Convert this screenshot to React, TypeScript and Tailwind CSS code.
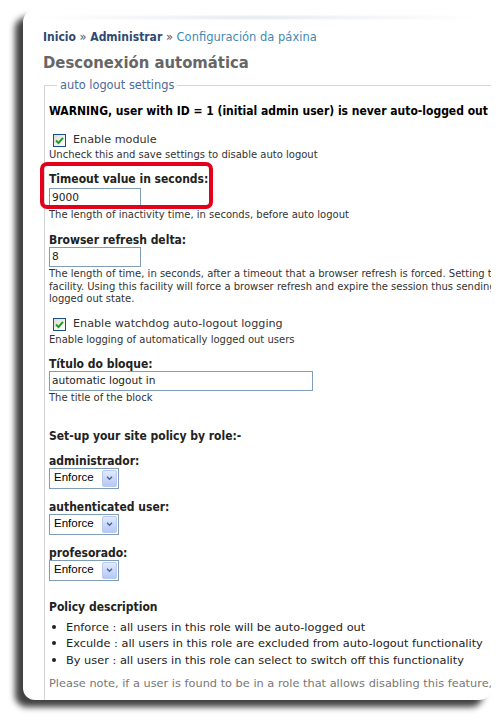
import React from "react";

const font = { fontFamily: '"DejaVu Sans", Verdana, sans-serif' };
const boldFont = { fontFamily: '"DejaVu Sans Condensed", "DejaVu Sans", Tahoma, sans-serif' };

function Checkbox() {
  return (
    <span className="flex h-[13px] w-[13px] shrink-0 items-center justify-center border border-[#1c5180] bg-gradient-to-br from-[#dcdcd7] to-white">
      <svg viewBox="0 0 9 9" className="h-[9px] w-[9px]">
        <path d="M1 4.5 L3.5 7 L8 1.8" fill="none" stroke="#21a121" strokeWidth="2" />
      </svg>
    </span>
  );
}

function TextInput({ value, width }: { value: string; width: string }) {
  return (
    <div className={`flex h-[20px] items-center border border-[#7f9db9] bg-white pl-[2px] text-[10.6px] text-[#222] ${width}`}>
      {value}
    </div>
  );
}

function Select() {
  return (
    <div className="flex h-[21px] w-[70px] items-center justify-between border border-[#7f9db9] bg-white pl-[4px] pr-[1px] text-[11.5px] text-black" style={{ fontFamily: '"Liberation Sans", Arial, sans-serif' }}>
      <span>Enforce</span>
      <span className="flex h-[17px] w-[15px] items-center justify-center rounded-[2px] border border-[#b9c9ef] bg-gradient-to-b from-[#e1eafd] to-[#b5c8f5]">
        <svg viewBox="0 0 8 6" className="h-[5px] w-[7px]">
          <path d="M1 1 L4 4 L7 1" fill="none" stroke="#4d6185" strokeWidth="1.6" />
        </svg>
      </span>
    </div>
  );
}

function Label({ children, className = "" }: { children: React.ReactNode; className?: string }) {
  return (
    <div className={`whitespace-nowrap text-[12px] font-bold leading-[14px] text-[#222] ${className}`} style={boldFont}>
      {children}
    </div>
  );
}

function Desc({ children, className = "" }: { children: React.ReactNode; className?: string }) {
  return <div className={`whitespace-nowrap text-[10px] leading-[13px] text-[#333] ${className}`}>{children}</div>;
}

export default function App() {
  return (
    <div className="h-[723px] w-[500px] overflow-hidden bg-white pt-[10px] pl-[23px]" style={font}>
      <div className="relative h-[690px] w-[468px] overflow-hidden rounded-[12px] bg-white pt-[19px] pl-[20px] shadow-[-8px_7px_6px_rgba(0,0,0,0.75)]">
        <div className="absolute left-[10px] right-[10px] top-[6px] h-[3px] bg-gradient-to-r from-transparent via-[#dfe6ee] to-transparent blur-[1px]" />
        <div className="whitespace-nowrap text-[11.5px] leading-[16px]">
          <span className="text-[12px] font-bold text-[#2d4a73]" style={boldFont}>Inicio</span>
          <span className="text-[#555]"> » </span>
          <span className="text-[12px] font-bold text-[#2d4a73]" style={boldFont}>Administrar</span>
          <span className="text-[#555]"> » </span>
          <span className="text-[#3f8ab4]">Configuración da páxina</span>
        </div>
        <h1 className="mt-[7px] whitespace-nowrap text-[16.5px] font-bold leading-[22px] text-[#666]" style={boldFont}>
          Desconexión automática
        </h1>

        <fieldset className="ml-[1px] mt-[4px] w-[480px] border border-[#d4d4d4] pb-[20px] pl-[4px] pt-0">
          <legend className="ml-[8px] px-[3px] text-[11.4px] leading-[15px] text-[#4a6a9b]">auto logout settings</legend>

          <div className="mt-[11px] whitespace-nowrap text-[12px] font-bold leading-[15px] text-black" style={boldFont}>
            WARNING, user with ID = 1 (initial admin user) is never auto-logged out
          </div>

          <div className="ml-[4px] mt-[13px] flex h-[16px] items-center gap-[7px] text-[11.2px] text-[#333]">
            <Checkbox />
            <span>Enable module</span>
          </div>
          <Desc>Uncheck this and save settings to disable auto logout</Desc>

          <Label className="mt-[11px]">Timeout value in seconds:</Label>
          <div className="mt-[2px]">
            <TextInput value="9000" width="w-[92px]" />
          </div>
          <Desc>The length of inactivity time, in seconds, before auto logout</Desc>

          <Label className="mt-[12px]">Browser refresh delta:</Label>
          <TextInput value="8" width="w-[92px]" />
          <div className="mt-[1px] whitespace-nowrap text-[10px] leading-[12.5px] text-[#333]">
            The length of time, in seconds, after a timeout that a browser refresh is forced. Setting this to 0 disables this
            <br />
            facility. Using this facility will force a browser refresh and expire the session thus sending the user to the
            <br />
            logged out state.
          </div>

          <div className="ml-[4px] mt-[11px] flex h-[16px] items-center gap-[7px] text-[11.2px] text-[#333]">
            <Checkbox />
            <span>Enable watchdog auto-logout logging</span>
          </div>
          <Desc>Enable logging of automatically logged out users</Desc>

          <Label className="mt-[11px]">Título do bloque:</Label>
          <TextInput value="automatic logout in" width="w-[264px]" />
          <Desc>The title of the block</Desc>

          <Label className="mt-[25px]">Set-up your site policy by role:-</Label>

          <Label className="mt-[11px]">administrador:</Label>
          <Select />
          <Label className="mt-[11px]">authenticated user:</Label>
          <Select />
          <Label className="mt-[11px]">profesorado:</Label>
          <Select />

          <div className="mt-[19px] text-[12px] font-bold leading-[15px] text-[#222]" style={boldFont}>
            Policy description
          </div>
          <ul className="mt-[4px] text-[11.35px] leading-[16.5px] text-[#222]">
            {[
              "Enforce : all users in this role will be auto-logged out",
              "Exculde : all users in this role are excluded from auto-logout functionality",
              "By user : all users in this role can select to switch off this functionality",
            ].map((t) => (
              <li key={t} className="flex items-center whitespace-nowrap">
                <span className="ml-[3px] mr-[10px] h-[4px] w-[4px] rounded-full bg-[#222]" />
                {t}
              </li>
            ))}
          </ul>
          <div className="mt-[7px] whitespace-nowrap text-[11.35px] leading-[16px] text-[#777]">
            Please note, if a user is found to be in a role that allows disabling this feature, this overrides any enforcement
          </div>
        </fieldset>

        <div className="absolute left-[17px] top-[152px] h-[47px] w-[173px] rounded-[7px] border-[4px] border-[#e3001b]" />
      </div>
    </div>
  );
}
